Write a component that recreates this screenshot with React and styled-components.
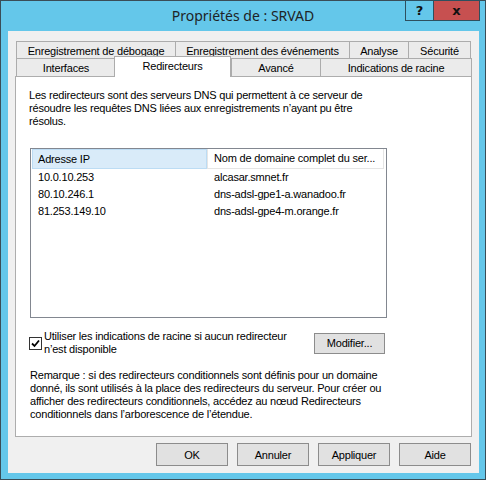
import React from 'react';
import styled, { createGlobalStyle } from 'styled-components';

const Global = createGlobalStyle`
  html, body { margin: 0; padding: 0; background: #ffffff; }
  body {
    font-family: "Liberation Sans", Arial, sans-serif;
    font-size: 11px;
    letter-spacing: -0.2px;
    color: #000;
  }
`;

const Window = styled.div`
  width: 486px;
  height: 480px;
  box-sizing: border-box;
  background: #64c7ea;
  border: 1px solid #3a4d57;
  display: flex;
  flex-direction: column;
`;

const TitleBar = styled.div`
  height: 30px;
  display: grid;
  grid-template-columns: 1fr auto 1fr;
  align-items: start;
`;

const Title = styled.div`
  grid-column: 2;
  font-family: "Noto Sans", "Open Sans", sans-serif;
  font-size: 14px;
  letter-spacing: 0;
  line-height: 30px;
  color: #1e2326;
`;

const Controls = styled.div`
  grid-column: 3;
  justify-self: end;
  display: flex;
  margin-right: 5px;
  margin-top: -1px;
`;

const CtrlButton = styled.div`
  height: 21px;
  width: ${p => p.w}px;
  box-sizing: border-box;
  border: 1px solid #2e4f5e;
  margin-left: -1px;
  background: ${p => (p.close ? '#c75050' : 'transparent')};
  display: flex;
  align-items: center;
  justify-content: center;
  font-family: "DejaVu Sans", sans-serif;
  font-weight: bold;
  font-size: 13px;
  letter-spacing: 0;
  color: #111;
`;

const Client = styled.div`
  flex: 1;
  margin: 0 6px 6px 7px;
  background: #f0f0f0;
  padding: 10px 7px 6px 7px;
  display: flex;
  flex-direction: column;
`;

const TabRow = styled.div`
  display: flex;
  align-items: flex-start;
  margin-left: 1px;
  margin-top: ${p => (p.second ? '-1px' : '0')};
  position: relative;
  z-index: ${p => (p.second ? 2 : 1)};
`;

const Tab = styled.div`
  box-sizing: border-box;
  width: ${p => p.w}px;
  height: 18px;
  margin-left: ${p => (p.first ? '0' : '-1px')};
  border: 1px solid #acacac;
  border-bottom: ${p => (p.open ? 'none' : '1px solid #acacac')};
  background: #ebebeb;
  display: flex;
  align-items: center;
  justify-content: center;
  white-space: nowrap;
  padding-top: 1px;
`;

const ActiveTab = styled.div`
  box-sizing: border-box;
  width: ${p => p.w}px;
  height: 21px;
  margin: -2px 0 -1px -2px;
  border: 1px solid #acacac;
  border-bottom: none;
  background: #ffffff;
  position: relative;
  z-index: 3;
  display: flex;
  justify-content: center;
  padding-top: 3px;
  white-space: nowrap;
`;

const Panel = styled.div`
  box-sizing: border-box;
  height: 361px;
  background: #ffffff;
  border: 1px solid #adadad;
  padding: 12px 13px 0 13px;
  display: flex;
  flex-direction: column;
`;

const Para = styled.p`
  margin: 0;
  line-height: 13px;
  white-space: nowrap;
`;

const List = styled.div`
  box-sizing: border-box;
  width: 357px;
  height: 170px;
  margin: 20px 0 0 1px;
  border: 1px solid #828790;
  padding: 0 1px;
`;

const HeaderRow = styled.div`
  display: flex;
  height: 20px;
`;

const HeaderCell = styled.div`
  box-sizing: border-box;
  width: ${p => p.w}px;
  height: 20px;
  line-height: 18px;
  padding-left: ${p => p.pad}px;
  background: ${p => (p.hot ? '#d9ebf9' : '#ffffff')};
  border: 1px solid ${p => (p.hot ? '#bcdcf4' : '#e5e5e5')};
  border-top: ${p => (p.hot ? '1px solid #bcdcf4' : 'none')};
  white-space: nowrap;
  overflow: hidden;
`;

const Row = styled.div`
  display: flex;
  height: 17px;
  line-height: 17px;
`;

const Cell = styled.div`
  width: ${p => p.w}px;
  padding-left: ${p => p.pad}px;
  box-sizing: border-box;
  white-space: nowrap;
`;

const CheckRow = styled.div`
  width: 356px;
  margin-top: 12px;
  display: flex;
  align-items: center;
  justify-content: space-between;
`;

const CheckLabel = styled.label`
  display: flex;
  align-items: center;
  gap: 2px;
  line-height: 13px;
  white-space: nowrap;
`;

const Box = styled.span`
  width: 13px;
  height: 13px;
  box-sizing: border-box;
  border: 1px solid #333333;
  background: #ffffff;
  display: flex;
  align-items: center;
  justify-content: center;
  margin-top: 1px;
`;

const Button = styled.button`
  box-sizing: border-box;
  width: ${p => p.w || 72}px;
  height: ${p => p.h || 23}px;
  margin: 0;
  padding: 0;
  background: #e1e1e1;
  border: 1px solid #8c8c8c;
  font-family: "Liberation Sans", Arial, sans-serif;
  font-size: 11px;
  letter-spacing: -0.2px;
  color: #000;
`;

const Note = styled(Para)`
  margin-top: 13px;
  margin-left: 1px;
`;

const ButtonBar = styled.div`
  display: flex;
  justify-content: flex-end;
  gap: 9px;
  margin-top: 6px;
  padding-right: 1px;
`;

const rows = [
  ['10.0.10.253', 'alcasar.smnet.fr'],
  ['80.10.246.1', 'dns-adsl-gpe1-a.wanadoo.fr'],
  ['81.253.149.10', 'dns-adsl-gpe4-m.orange.fr'],
];

export default function App() {
  return (
    <>
      <Global />
      <Window>
        <TitleBar>
          <Title>Propriétés de : SRVAD</Title>
          <Controls>
            <CtrlButton w={29}>?</CtrlButton>
            <CtrlButton w={47} close>x</CtrlButton>
          </Controls>
        </TitleBar>
        <Client>
          <TabRow>
            <Tab first w={160}>Enregistrement de débogage</Tab>
            <Tab w={175}>Enregistrement des événements</Tab>
            <Tab w={60}>Analyse</Tab>
            <Tab w={63}>Sécurité</Tab>
          </TabRow>
          <TabRow second>
            <Tab first open w={100}>Interfaces</Tab>
            <ActiveTab w={117}>Redirecteurs</ActiveTab>
            <Tab open w={90} style={{ marginLeft: 0 }}>Avancé</Tab>
            <Tab open w={152}>Indications de racine</Tab>
          </TabRow>
          <Panel>
            <Para>
              Les redirecteurs sont des serveurs DNS qui permettent à ce serveur de<br />
              résoudre les requêtes DNS liées aux enregistrements n’ayant pu être<br />
              résolus.
            </Para>
            <List>
              <HeaderRow>
                <HeaderCell hot w={175} pad={5}>Adresse IP</HeaderCell>
                <HeaderCell w={177} pad={6}>Nom de domaine complet du ser...</HeaderCell>
              </HeaderRow>
              {rows.map(([ip, name]) => (
                <Row key={ip}>
                  <Cell w={175} pad={6}>{ip}</Cell>
                  <Cell w={177} pad={7}>{name}</Cell>
                </Row>
              ))}
            </List>
            <CheckRow>
              <CheckLabel>
                <Box>
                  <svg width="9" height="9" viewBox="0 0 9 9">
                    <path d="M1 4.5 L3.5 7 L8 1.5" fill="none" stroke="#000" strokeWidth="1.8" />
                  </svg>
                </Box>
                <span>
                  Utiliser les indications de racine si aucun redirecteur<br />
                  n’est disponible
                </span>
              </CheckLabel>
              <Button w={71} h={21}>Modifier...</Button>
            </CheckRow>
            <Note>
              Remarque : si des redirecteurs conditionnels sont définis pour un domaine<br />
              donné, ils sont utilisés à la place des redirecteurs du serveur. Pour créer ou<br />
              afficher des redirecteurs conditionnels, accédez au nœud Redirecteurs<br />
              conditionnels dans l’arborescence de l’étendue.
            </Note>
          </Panel>
          <ButtonBar>
            <Button>OK</Button>
            <Button>Annuler</Button>
            <Button>Appliquer</Button>
            <Button>Aide</Button>
          </ButtonBar>
        </Client>
      </Window>
    </>
  );
}
